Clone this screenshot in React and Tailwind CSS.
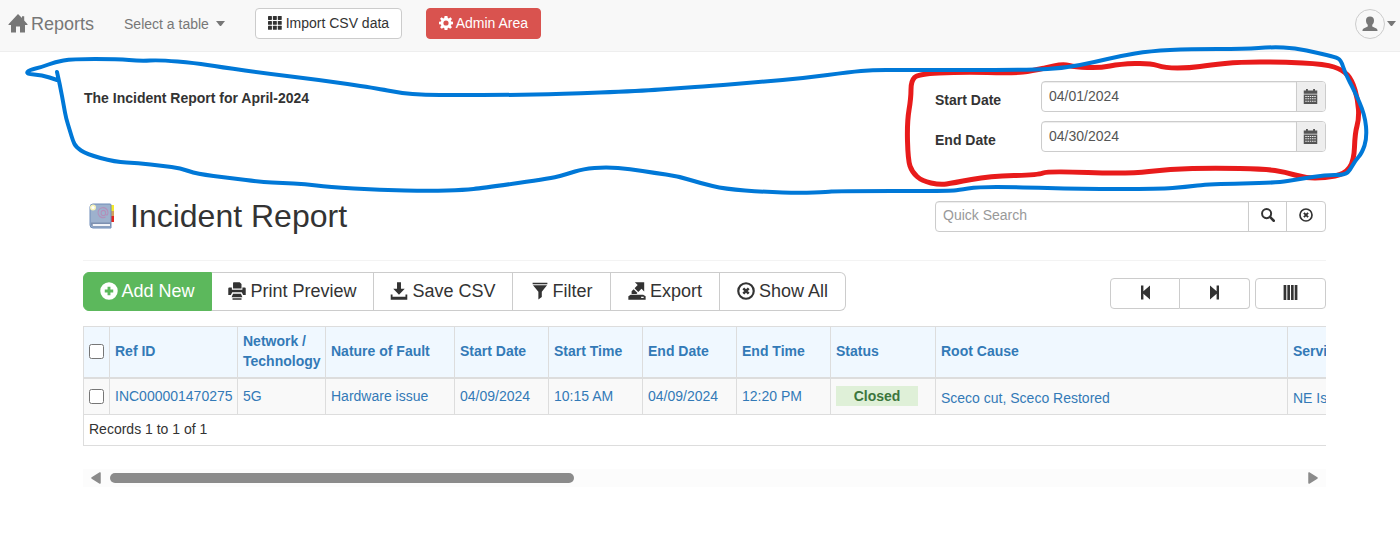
import React, { useState } from "react";

const columns = [
  { label: "Ref ID", width: "w-32", value: "INC000001470275" },
  { label: "Network / Technology", width: "w-[88px]", value: "5G" },
  { label: "Nature of Fault", width: "w-[129px]", value: "Hardware issue" },
  { label: "Start Date", width: "w-[94px]", value: "04/09/2024" },
  { label: "Start Time", width: "w-[94px]", value: "10:15 AM" },
  { label: "End Date", width: "w-[94px]", value: "04/09/2024" },
  { label: "End Time", width: "w-[94px]", value: "12:20 PM" },
  { label: "Status", width: "w-[105px]", value: "Closed", badge: true },
  { label: "Root Cause", width: "w-[352px]", value: "Sceco cut, Sceco Restored", low: true },
  { label: "Service Impact", width: "w-[150px]", value: "NE Isolated", low: true },
];

const blueStroke = [
  [57, 72], [60, 85], [64, 107], [66, 118], [70, 131], [73, 141], [76, 147], [86, 154], [115, 162],
  [138, 163], [163, 166], [180, 168], [197, 174], [230, 178], [262, 182], [282, 183], [305, 184],
  [328, 187], [380, 190], [430, 191], [464, 190], [483, 188], [553, 178], [567, 174], [583, 169],
  [606, 167], [630, 169], [655, 173], [677, 176], [700, 183], [725, 189], [765, 192], [800, 193],
  [828, 192], [835, 191], [950, 191], [958, 190], [978, 187], [1015, 187], [1080, 189], [1160, 189],
  [1185, 187], [1210, 184], [1275, 183], [1300, 179], [1325, 175], [1345, 175], [1350, 170],
  [1355, 161], [1362, 153], [1367, 138], [1365, 115], [1354, 90], [1345, 73], [1341, 60], [1335, 57],
  [1318, 53], [1295, 48], [1272, 47], [1245, 49], [1190, 49], [1150, 51], [1120, 56], [1095, 62],
  [1065, 68], [1030, 70], [900, 70], [872, 70], [850, 72], [805, 78], [760, 82], [710, 86], [680, 88],
  [640, 91], [560, 94], [510, 95], [455, 95], [425, 95], [400, 93], [375, 88], [320, 80], [270, 74],
  [220, 67], [195, 63], [160, 60], [140, 61], [118, 59], [72, 59], [55, 62], [42, 67], [29, 70],
  [26, 74], [42, 75], [57, 80],
];

const redStroke = [
  [1045, 68], [1031, 71], [1015, 73], [960, 72], [918, 74], [911, 81], [911, 98], [907, 122],
  [908, 160], [912, 172], [922, 181], [940, 185], [953, 183], [990, 176], [1038, 175], [1048, 171],
  [1128, 174], [1170, 169], [1215, 168], [1265, 169], [1285, 172], [1305, 178], [1325, 178],
  [1345, 174], [1354, 161], [1355, 133], [1359, 119], [1358, 100], [1352, 80], [1343, 70], [1325, 64],
  [1280, 62], [1240, 62], [1210, 65], [1190, 68], [1165, 68], [1150, 63], [1120, 64], [1100, 68],
  [1075, 67], [1063, 64], [1045, 68],
];

// joins the points with quadratic curves through their midpoints
const toPath = (points) => {
  let d = `M${points[0][0]} ${points[0][1]}`;
  for (let i = 1; i < points.length - 1; i++) {
    const [x, y] = points[i];
    const [nx, ny] = points[i + 1];
    d += `Q${x} ${y} ${(x + nx) / 2} ${(y + ny) / 2}`;
  }
  const last = points[points.length - 1];
  return `${d}L${last[0]} ${last[1]}`;
};

const Icon = ({ className, children }) => (
  <svg viewBox="0 0 20 20" fill="currentColor" aria-hidden="true" className={`shrink-0 ${className}`}>
    {children}
  </svg>
);

const HomeIcon = () => (
  <Icon className="w-5 h-5">
    <path d="M10 0 14 4V2.300H16.200V6.400L19.500 10.200V11H17V18.500H12V12.500H8V18.500H3V11H.5V10.200Z" />
  </Icon>
);

const GridIcon = () => (
  <Icon className="w-3.5 h-3.5">
    {[0, 7, 14].map((y) =>
      [0, 7, 14].map((x) => <rect key={`${x}-${y}`} x={x} y={y} width="5.6" height="5.6" rx=".8" />)
    )}
  </Icon>
);

const CogIcon = () => (
  <Icon className="w-3.5 h-3.5">
    <path
      fillRule="evenodd"
      d="M8 0H12L12.6 3 14 3.6 16.4 1.9 18.6 4.2 16.8 6.5 17.3 7.8 20 8.3V11.7L17.3 12.2 16.8 13.6 18.5 15.9 16 18.3 13.8 16.7 12.5 17.2 12 20H8L7.5 17.2 6.2 16.7 4 18.3 1.6 15.9 3.3 13.6 2.8 12.2 0 11.7V8.3L2.8 7.8 3.3 6.5 1.5 4.1 3.8 1.8 6.1 3.5 7.4 3ZM10 6.3A3.7 3.7 0 1 0 10 13.7 3.7 3.7 0 1 0 10 6.3Z"
    />
  </Icon>
);

const UserIcon = () => (
  <Icon className="w-4 h-4">
    <path d="M10 .5C13.2.5 15 2.400 15 5.400 15 8 14.200 9.700 12.800 11V13L18 15.600C19 16.200 19.400 17 19.400 18.600H.6C.6 17 1 16.200 2 15.600L7.200 13V11C5.800 9.700 5 8 5 5.400 5 2.400 6.800.5 10 .5Z" />
  </Icon>
);

const CalendarIcon = () => (
  <Icon className="w-[15px] h-[15px]">
    <path
      fillRule="evenodd"
      d="M1 2H4V0H6.5V2H13.5V0H16V2H19V6.200H1ZM1 7.200H19V20H1ZM3 9.2V10.6H5V9.2ZM6 9.2V10.6H8V9.2ZM9 9.2V10.6H11V9.2ZM12 9.2V10.6H14V9.2ZM15 9.2V10.6H17V9.2ZM3 12.4V13.8H5V12.4ZM6 12.4V13.8H8V12.4ZM9 12.4V13.8H11V12.4ZM12 12.4V13.8H14V12.4ZM15 12.4V13.8H17V12.4ZM3 15.6V17H5V15.6ZM6 15.6V17H8V15.6ZM9 15.6V17H11V15.6ZM12 15.6V17H14V15.6ZM15 15.6V17H17V15.6Z"
    />
  </Icon>
);

const SearchIcon = () => (
  <Icon className="w-3.5 h-3.5">
    <circle cx="8" cy="8" r="6.5" fill="none" stroke="currentColor" strokeWidth="2.8" />
    <path d="M12.8 12.8 18.2 18.2" stroke="currentColor" strokeWidth="3.6" strokeLinecap="round" />
  </Icon>
);

const RemoveCircleIcon = ({ className }) => (
  <Icon className={className}>
    <circle cx="10" cy="10" r="8.6" fill="none" stroke="currentColor" strokeWidth="2.4" />
    <path d="M7 7 13 13M13 7 7 13" stroke="currentColor" strokeWidth="2.8" />
  </Icon>
);

const PlusIcon = () => (
  <Icon className="w-[18px] h-[18px]">
    <path
      fillRule="evenodd"
      d="M10 .3A9.7 9.7 0 1 1 10 19.7 9.7 9.7 0 1 1 10 .3ZM8.4 5.3V8.4H5.3V11.6H8.4V14.7H11.6V11.6H14.7V8.4H11.6V5.3Z"
    />
  </Icon>
);

const PrintIcon = () => (
  <Icon className="w-[18px] h-[18px]">
    <path d="M5.6 1.2Q5.6.4 6.4.4H13L15 2.3V7.2H5.6ZM.3 7.2Q.3 6 1.5 6H4.3V8.6H16V6H18.5Q19.7 6 19.7 7.2V14.4H16.8L15.3 11.5H4.7L3.2 14.4H.3ZM5.6 13H14.4L16 17H4ZM5 18H15V19.6H5Z" />
  </Icon>
);

const SaveIcon = () => (
  <Icon className="w-[18px] h-[18px]">
    <path d="M7.8.2H12.2V7.5H16.4L10 14.200 3.6 7.5H7.8ZM.8 14H2.8V16.5H17.2V14H19.2V19.6H.8Z" />
  </Icon>
);

const FilterIcon = () => (
  <Icon className="w-[18px] h-[18px]">
    <path d="M1.8.8H18.2V2.4H1.8ZM2.2 3.6H17.8L12 10.8V16.6L8.2 19.4V10.8Z" />
  </Icon>
);

const ExportIcon = () => (
  <Icon className="w-[18px] h-[18px]">
    <path d="M7.6.2H18V10.5L15 7.500 11.4 11 7.3 6.9 10.8 3.4ZM6.3 8 10.5 12.2 9.4 13.2H4V10.3ZM3 14.2H16.8L19.6 15.8V19.8H.4V15.8ZM14.6 16.5V17.8H17.4V16.5Z" fillRule="evenodd" />
  </Icon>
);

const StepIcon = ({ flip }) => (
  <Icon className={flip ? "w-[15px] h-[15px] -scale-x-100" : "w-[15px] h-[15px]"}>
    <path d="M4 .8H7.2V8.4L16 .8V19.2L7.2 11.6V19.2H4Z" />
  </Icon>
);

const BarsIcon = () => (
  <Icon className="w-[15px] h-[15px]">
    <path d="M.8 0H4.4V20H.8ZM5.8 0H9.3V20H5.8ZM10.7 0H14.2V20H10.7ZM15.6 0H19.2V20H15.6Z" />
  </Icon>
);

const BookIcon = () => (
  <svg viewBox="0 0 26 26" aria-hidden="true" className="w-[26px] h-[26px] shrink-0">
    <rect x="21" y="2" width="4" height="6" fill="#f4e92a" />
    <rect x="21" y="8" width="4" height="5" fill="#d2a05c" />
    <rect x="21" y="13" width="4" height="6" fill="#e3261f" />
    <path d="M4 1H21Q22 1 22 2V25H4Q1 25 1 22V4Q1 1 4 1Z" fill="#9db1cd" stroke="#6f8cb8" />
    <path d="M2 19.500H22V23.500H4Q2 23.500 2 21.500Z" fill="#7d90b0" />
    <path d="M4 21H21V23H4Q3 22 4 21Z" fill="#f2f4f8" />
    <circle cx="4" cy="4.500" r="3" fill="#f6f3b8" />
    <circle cx="4" cy="4.500" r="1.500" fill="#fff" />
    <path
      d="M16.500 8V11.500Q18.800 13 19 9.500A5 5 0 1 0 16.500 14M16.500 10A2.200 2.200 0 1 0 12.200 10 2.200 2.200 0 1 0 16.500 10"
      fill="none"
      stroke="#b38fba"
      strokeWidth="1.1"
    />
  </svg>
);

const Caret = () => (
  <svg viewBox="0 0 9 5" aria-hidden="true" className="w-[9px] h-[5px] shrink-0">
    <path d="M0 0H9L5 5H4Z" fill="#777" />
  </svg>
);

const DateField = ({ id, label, value, onChange }) => (
  <div className="flex h-[31px]">
    <label htmlFor={id} className="w-[106px] pt-[9px] font-bold">
      {label}
    </label>
    <div className="flex flex-1 min-w-0 rounded border border-[#ccc] overflow-hidden">
      <input
        id={id}
        type="text"
        value={value}
        onChange={(e) => onChange(e.target.value)}
        className="flex-1 min-w-0 px-[7px] pb-0.5 text-[#555] shadow-[inset_0_1px_1px_rgba(0,0,0,0.075)] outline-none"
      />
      <button
        type="button"
        aria-label={`Pick ${label}`}
        className="w-[29px] pr-px flex items-center justify-center bg-[#eee] border-l border-[#ccc] text-[#555]"
      >
        <CalendarIcon />
      </button>
    </div>
  </div>
);

const toolButtons = [
  { label: "Print Preview", icon: PrintIcon, width: "w-[162px]" },
  { label: "Save CSV", icon: SaveIcon, width: "w-[139px]" },
  { label: "Filter", icon: FilterIcon, width: "w-[98px]" },
  { label: "Export", icon: ExportIcon, width: "w-[109px]" },
];

export default function App() {
  const [startDate, setStartDate] = useState("04/01/2024");
  const [endDate, setEndDate] = useState("04/30/2024");
  const [search, setSearch] = useState("");
  const [selected, setSelected] = useState(false);

  return (
    <div className="relative bg-white text-[#333] text-sm leading-5 font-['Liberation_Sans',Arial,sans-serif]">
      <nav className="h-[52px] pb-1 pl-2 pr-1 flex items-center bg-[#f8f8f8] border-b border-[#eee] text-[#777]">
        <a href="#" className="flex items-center gap-[3px] text-lg">
          <HomeIcon />
          Reports
        </a>
        <button type="button" className="ml-[30px] flex items-center gap-[7px]">
          Select a table
          <Caret />
        </button>
        <button
          type="button"
          className="ml-[30px] h-[31px] w-[147px] flex items-center justify-center gap-1 rounded border border-[#ccc] bg-white text-[#333] pb-0.5"
        >
          <GridIcon />
          Import CSV data
        </button>
        <button
          type="button"
          className="ml-6 h-[31px] w-[115px] flex items-center justify-center gap-[3px] rounded border border-[#d9534f] bg-[#d9534f] text-white pb-0.5"
        >
          <CogIcon />
          Admin Area
        </button>
        <button type="button" aria-label="Account" className="ml-auto flex items-center gap-[2px]">
          <span className="w-[30px] h-[30px] rounded-full border border-[#ccc] flex items-center justify-center">
            <UserIcon />
          </span>
          <Caret />
        </button>
      </nav>

      <main className="pl-[83px] pr-[74px] pt-[29px]">
        <section className="flex justify-between">
          <h2 className="pt-[7px] pl-px font-bold">The Incident Report for April-2024</h2>
          <div className="w-[391px] flex flex-col gap-[9px]">
            <DateField id="start" label="Start Date" value={startDate} onChange={setStartDate} />
            <DateField id="end" label="End Date" value={endDate} onChange={setEndDate} />
          </div>
        </section>

        <header className="mt-11 pb-6 flex items-center justify-between border-b border-[#f3f3f3]">
          <h1 className="pl-1.5 flex items-center gap-[15px] text-[32px] leading-10">
            <BookIcon />
            Incident Report
          </h1>
          <div className="w-[391px] h-[31px] flex rounded border border-[#ccc] overflow-hidden">
            <input
              type="text"
              aria-label="Quick Search"
              placeholder="Quick Search"
              value={search}
              onChange={(e) => setSearch(e.target.value)}
              className="flex-1 min-w-0 px-[7px] pb-0.5 placeholder:text-[#999] shadow-[inset_0_1px_1px_rgba(0,0,0,0.075)] outline-none"
            />
            <button type="button" aria-label="Search" className="w-[38px] pb-0.5 flex items-center justify-center border-l border-[#ccc]">
              <SearchIcon />
            </button>
            <button
              type="button"
              aria-label="Clear search"
              onClick={() => setSearch("")}
              className="w-[39px] pb-0.5 flex items-center justify-center border-l border-[#ccc]"
            >
              <RemoveCircleIcon className="w-3.5 h-3.5" />
            </button>
          </div>
        </header>

        <div className="mt-[11px] flex items-center justify-between">
          <div className="flex h-[39px] text-lg leading-6">
            <button
              type="button"
              className="w-[129px] pb-0.5 flex items-center justify-center gap-[3px] rounded-l-md border border-[#5cb85c] bg-[#5cb85c] text-white"
            >
              <PlusIcon />
              Add New
            </button>
            {toolButtons.map(({ label, icon: ToolIcon, width }) => (
              <button
                key={label}
                type="button"
                className={`${width} pb-0.5 flex items-center justify-center gap-1 border-y border-r border-[#ccc]`}
              >
                <ToolIcon />
                {label}
              </button>
            ))}
            <button
              type="button"
              className="w-[126px] pb-0.5 flex items-center justify-center gap-1 rounded-r-md border-y border-r border-[#ccc]"
            >
              <RemoveCircleIcon className="w-[18px] h-[18px]" />
              Show All
            </button>
          </div>
          <div className="mt-1 flex h-[31px]">
            <button type="button" aria-label="Previous page" className="w-[70px] pb-0.5 flex items-center justify-center rounded-l border border-[#ccc]">
              <StepIcon />
            </button>
            <button type="button" aria-label="Next page" className="w-[70px] pb-0.5 flex items-center justify-center rounded-r border-y border-r border-[#ccc]">
              <StepIcon flip />
            </button>
            <button type="button" aria-label="Columns" className="ml-[5px] w-[71px] pb-0.5 flex items-center justify-center rounded border border-[#ccc]">
              <BarsIcon />
            </button>
          </div>
        </div>

        <div className="mt-[15px] overflow-hidden">
          <table className="w-[1355px] table-fixed border-collapse border border-[#ddd] text-left">
            <thead>
              <tr className="h-[51px] bg-[#f0f8ff] text-[#337ab7] border-b-2 border-[#ddd]">
                <th className="w-[26px] border-r border-[#ddd]">
                  <input
                    type="checkbox"
                    aria-label="Select all records"
                    checked={selected}
                    onChange={(e) => setSelected(e.target.checked)}
                    className="block mx-auto w-[15px] h-[15px]"
                  />
                </th>
                {columns.map((col) => (
                  <th key={col.label} className={`${col.width} pl-[5px] pb-0.5 border-r border-[#ddd] font-bold`}>
                    {col.label}
                  </th>
                ))}
              </tr>
            </thead>
            <tbody>
              <tr className="h-[37px] bg-[#f9f9f9] border-b border-[#ddd]">
                <td className="border-r border-[#ddd]">
                  <input
                    type="checkbox"
                    aria-label="Select INC000001470275"
                    checked={selected}
                    onChange={(e) => setSelected(e.target.checked)}
                    className="block mx-auto w-[15px] h-[15px]"
                  />
                </td>
                {columns.map((col) => (
                  <td key={col.label} className={`pl-[5px] border-r border-[#ddd] ${col.low ? "pt-1" : ""}`}>
                    {col.badge ? (
                      <a href="#" className="block w-[82px] bg-[#dff0d8] text-center font-bold text-[#3c763d]">
                        {col.value}
                      </a>
                    ) : (
                      <a href="#" className="text-[#337ab7]">
                        {col.value}
                      </a>
                    )}
                  </td>
                ))}
              </tr>
            </tbody>
            <tfoot>
              <tr className="h-[31px]">
                <td colSpan={11} className="pl-[5px] pb-0.5">
                  Records 1 to 1 of 1
                </td>
              </tr>
            </tfoot>
          </table>
        </div>

        <div className="mt-[23px] h-[18px] px-2 flex items-center gap-[9px] bg-[#fcfcfc] text-[#8b8b8b]">
          <svg viewBox="0 0 10 12" aria-hidden="true" className="w-2.5 h-3">
            <path d="M9 1V11L1 6Z" fill="currentColor" stroke="currentColor" strokeWidth="1.500" strokeLinejoin="round" />
          </svg>
          <div className="flex-1">
            <div className="w-[39%] h-2.5 rounded-full bg-[#8b8b8b]" />
          </div>
          <svg viewBox="0 0 10 12" aria-hidden="true" className="w-2.5 h-3">
            <path d="M1 1V11L9 6Z" fill="currentColor" stroke="currentColor" strokeWidth="1.500" strokeLinejoin="round" />
          </svg>
        </div>
      </main>

      {/* pen marks drawn over the page */}
      <svg
        viewBox="0 0 1400 200"
        fill="none"
        strokeLinecap="round"
        strokeLinejoin="round"
        aria-hidden="true"
        className="absolute top-0 left-0 w-full pointer-events-none"
      >
        <path d={toPath(redStroke)} stroke="#e81b1b" strokeWidth="5" />
        <path d={toPath(blueStroke)} stroke="#0078d7" strokeWidth="4" />
      </svg>
    </div>
  );
}
